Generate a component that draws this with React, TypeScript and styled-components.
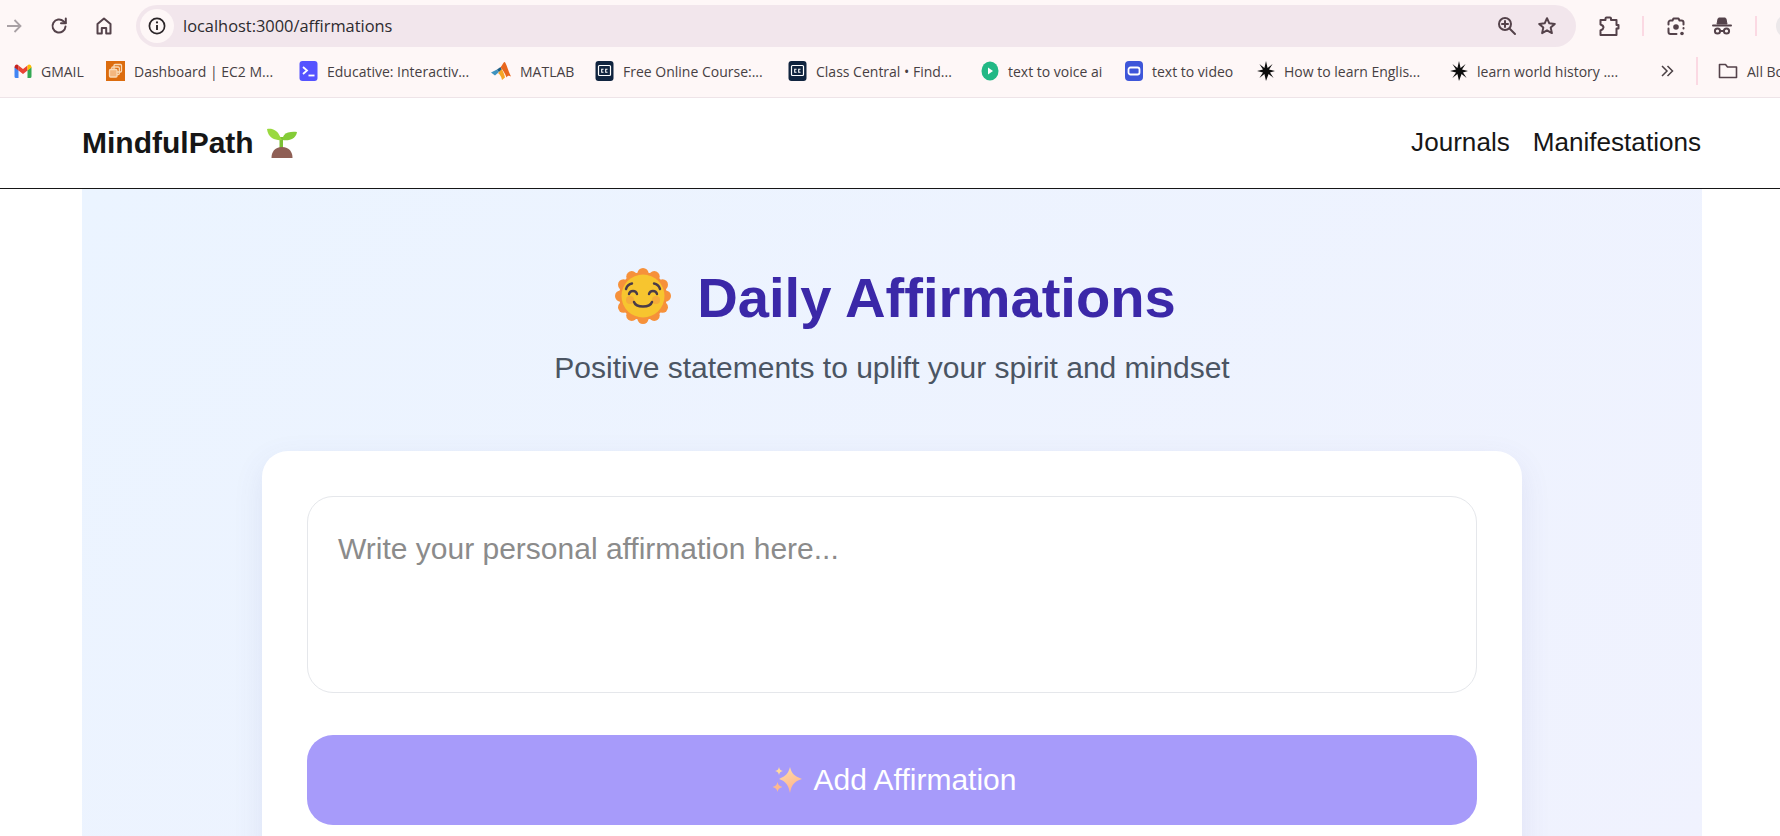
import React from 'react';
import styled, { createGlobalStyle } from 'styled-components';

const GlobalStyle = createGlobalStyle`
    html, body {
        margin: 0;
        padding: 0;
        height: 100%;
        overflow: hidden;
        background: #ffffff;
        font-family: 'Liberation Sans', Arial, sans-serif;
    }
    * {
        box-sizing: border-box;
    }
`;

const Page = styled.div`
    width: 1780px;
    height: 836px;
    overflow: hidden;
    display: flex;
    flex-direction: column;
`;

/* browser chrome */
const Chrome = styled.div`
    height: 98px;
    flex: none;
    background: #fef7f7;
    border-bottom: 1px solid #eee4e8;
    display: flex;
    flex-direction: column;
    font-family: 'Open Sans', 'Noto Sans', sans-serif;
`;

const Toolbar = styled.div`
    height: 47px;
    padding-top: 5px;
    display: flex;
    align-items: center;
`;

const NavIcons = styled.div`
    width: 136px;
    height: 42px;
    flex: none;
    padding-left: 4px;
    display: flex;
    align-items: center;
    gap: 25px;
`;

const AddressBar = styled.div`
    width: 1440px;
    height: 42px;
    flex: none;
    border-radius: 21px;
    background: #f2e6ec;
    padding: 0 19px 0 4px;
    display: flex;
    align-items: center;
`;

const InfoChip = styled.div`
    width: 34px;
    height: 34px;
    border-radius: 50%;
    background: #fef7f7;
    display: flex;
    align-items: center;
    justify-content: center;
    flex: none;
`;

const Url = styled.span`
    margin: 0 0 2px 9px;
    font-size: 16.4px;
    color: #2d2a2e;
    flex: 1;
`;

const AddressActions = styled.div`
    display: flex;
    align-items: center;
    gap: 20px;
`;

const ToolbarActions = styled.div`
    flex: 1;
    padding-left: 22px;
    display: flex;
    align-items: center;
`;

const ToolDivider = styled.div<{ $after: number }>`
    width: 2px;
    height: 20px;
    background: #fbd9e3;
    margin: 0 ${({ $after }) => $after}px 0 22px;
    flex: none;
`;

const ToolbarSpacer = styled.div`
    width: 25px;
    flex: none;
`;

const ProfileStub = styled.div`
    width: 24px;
    height: 24px;
    border-radius: 50%;
    background: #ece8ea;
    flex: none;
`;

const BookmarkBar = styled.div`
    height: 50px;
    padding: 0 0 2px 14px;
    display: flex;
    align-items: center;
    white-space: nowrap;
    overflow: hidden;
`;

const Bookmark = styled.div<{ $width: number }>`
    display: flex;
    align-items: center;
    gap: 9px;
    flex: none;
    width: ${({ $width }) => $width}px;
    font-size: 14px;
    color: #473f43;

    svg {
        flex: none;
    }
`;

const Chevrons = styled.div`
    width: 14px;
    height: 14px;
    flex: none;
    display: flex;
`;

const BarDivider = styled.div`
    width: 2px;
    height: 28px;
    background: #fbd9e3;
    margin: 0 20px 0 22px;
    flex: none;
`;

/* app header */
const Header = styled.header`
    height: 91px;
    flex: none;
    padding: 0 79px 0 82px;
    background: #ffffff;
    border-bottom: 1px solid #161616;
    display: flex;
    align-items: center;
    justify-content: space-between;
`;

const Brand = styled.div`
    display: flex;
    align-items: center;
    gap: 13px;
    font-size: 30px;
    font-weight: 700;
    color: #161616;
`;

const Links = styled.nav`
    display: flex;
    gap: 23px;
    padding-bottom: 2px;
`;

const NavLink = styled.a`
    font-size: 26.1px;
    color: #161616;
`;

/* page body */
const Main = styled.main`
    width: 1620px;
    margin: 0 auto 0 82px;
    flex: 1;
    padding-top: 79px;
    background: linear-gradient(135deg, #ebf4ff 0%, #f0f2fe 100%);
    display: flex;
    flex-direction: column;
    align-items: center;
`;

const Title = styled.h1`
    margin: 0;
    padding-left: 7px;
    display: flex;
    align-items: center;
    gap: 26px;
    font-size: 56.2px;
    line-height: 60px;
    font-weight: 700;
    color: #3b28a8;
`;

const SunSvg = styled.svg`
    flex: none;
    margin-bottom: 4px;
`;

const Subtitle = styled.p`
    margin: 22px 0 0;
    font-size: 30px;
    line-height: 36px;
    color: #4b5563;
`;

const Card = styled.section`
    width: 1260px;
    margin-top: 65px;
    padding: 45px;
    flex: none;
    border-radius: 26px;
    background: #ffffff;
    box-shadow: 0 10px 30px rgba(80, 80, 160, 0.1);
`;

const AffirmationInput = styled.textarea`
    display: block;
    width: 100%;
    height: 197px;
    padding: 34px 30px;
    border: 1px solid #e5e7eb;
    border-radius: 26px;
    resize: none;
    outline: none;
    font-family: 'Liberation Sans', Arial, sans-serif;
    font-size: 30px;
    line-height: 36px;
    color: #333333;

    &::placeholder {
        color: #8b8b8b;
        opacity: 1;
    }
`;

const AddButton = styled.button`
    width: 100%;
    height: 90px;
    margin-top: 42px;
    padding: 0 0 0 4px;
    border: none;
    border-radius: 26px;
    background: #a79bfa;
    color: #ffffff;
    font-family: 'Liberation Sans', Arial, sans-serif;
    font-size: 30px;
    display: flex;
    align-items: center;
    justify-content: center;
    gap: 12px;
`;

const Stroke = { fill: 'none', stroke: '#54424a', strokeWidth: 2, strokeLinecap: 'round', strokeLinejoin: 'round' } as const;

const ForwardIcon = () => (
    <svg width="20" height="20" viewBox="0 0 20 20">
        <path d="M3 10h13M10.500 4l6 6-6 6" fill="none" stroke="#a9a1a5" strokeWidth="1.800" />
    </svg>
);

const ReloadIcon = () => (
    <svg width="20" height="20" viewBox="0 0 20 20">
        <path d="M16.500 10.500a6.500 6.500 0 1 1-2-5.200L16.500 7" {...Stroke} />
        <path d="M16.800 2.500V7.300h-4.800" {...Stroke} />
    </svg>
);

const HomeIcon = () => (
    <svg width="20" height="20" viewBox="0 0 20 20">
        <path d="M3.500 17.500V8l6.500-5.500L16.500 8v9.500h-4.300V12H7.800v5.500z" {...Stroke} />
    </svg>
);

const InfoIcon = () => (
    <svg width="18" height="18" viewBox="0 0 18 18">
        <circle cx="9" cy="9" r="7.600" fill="none" stroke="#2b2528" strokeWidth="1.700" />
        <path d="M9 8v5" stroke="#2b2528" strokeWidth="1.900" />
        <circle cx="9" cy="5.400" r="1.100" fill="#2b2528" />
    </svg>
);

const ZoomIcon = () => (
    <svg width="20" height="20" viewBox="0 0 20 20">
        <circle cx="8" cy="8" r="6" {...Stroke} />
        <path d="M12.500 12.500l5.500 5.500M8 5v6M5 8h6" {...Stroke} />
    </svg>
);

const StarIcon = () => (
    <svg width="20" height="20" viewBox="0 0 20 20">
        <path d="M10 2.200l2.300 5.100 5.500.6-4.100 3.700 1.200 5.500L10 14.300l-4.900 2.800 1.200-5.500-4.100-3.700 5.500-.6z" {...Stroke} />
    </svg>
);

const ExtensionIcon = () => (
    <svg width="22" height="22" viewBox="0 0 22 22">
        <path
            d="M2.500 5H7.500V3.500Q7.500 2.500 8.500 2.500H12Q13 2.500 13 3.500V5H18.500V10H20.500V13.500H18.500V20H2.500V15.500Q5.500 14 5.500 12.500Q5.500 10.500 2.500 9.500Z"
            {...Stroke}
        />
    </svg>
);

const LensIcon = () => (
    <svg width="20" height="22" viewBox="0 0 20 22">
        <path d="M2.500 9.500V7.500a2 2 0 0 1 2-2H6.500L7.500 3.500h5l1 2h2a2 2 0 0 1 2 2v2M2.500 13.500V17a2 2 0 0 0 2 2h6M17.500 13V13.500" {...Stroke} />
        <circle cx="10" cy="12" r="2.800" fill="#54424a" />
        <circle cx="16" cy="18.500" r="1.800" fill="#54424a" />
    </svg>
);

const IncognitoIcon = () => (
    <svg width="22" height="22" viewBox="0 0 22 22">
        <path d="M6 9L7 4Q7.200 3 8 3H14Q14.800 3 15 4L16 9z" fill="#54424a" stroke="#54424a" strokeWidth="1" strokeLinejoin="round" />
        <path d="M2 10.500h18" {...Stroke} />
        <circle cx="6.500" cy="16" r="2.600" {...Stroke} />
        <circle cx="15.500" cy="16" r="2.600" {...Stroke} />
        <path d="M9.500 16h3" {...Stroke} />
    </svg>
);

const GmailIcon = () => (
    <svg width="18" height="14" viewBox="0 0 17 14">
        <path d="M0 3v9.500A1.500 1.500 0 0 0 1.500 14H4V6z" fill="#4285f4" />
        <path d="M17 3v9.500a1.500 1.500 0 0 1-1.500 1.500H13V6z" fill="#34a853" />
        <path d="M13 1.500V6.500L8.500 10 4 6.500v-5L8.500 5z" fill="#ea4335" />
        <path d="M0 3.500C0 1 2.500-.5 4 1.500V6.500L0 3.500z" fill="#c5221f" />
        <path d="M17 3.500C17 1 14.500-.5 13 1.500V6.500l4-3z" fill="#fbbc04" />
    </svg>
);

const Ec2Icon = () => (
    <svg width="19" height="20" viewBox="0 0 19 20">
        <rect width="19" height="20" fill="#dc6c0e" />
        <rect x="8" y="3.500" width="7.500" height="7.500" rx="1" fill="none" stroke="#f8d9b6" strokeWidth="1.300" />
        <rect x="5.800" y="6" width="7.500" height="7.500" rx="1" fill="none" stroke="#f8d9b6" strokeWidth="1.300" />
        <rect x="3.500" y="8.500" width="7.500" height="7.500" rx="1" fill="#f3b67e" stroke="#f8d9b6" strokeWidth="1.300" />
    </svg>
);

const EducativeIcon = () => (
    <svg width="19" height="20" viewBox="0 0 18 20">
        <rect width="18" height="20" rx="3" fill="#5553ff" />
        <path d="M3.500 6l4 3.500-4 3.500" fill="none" stroke="#fff" strokeWidth="1.800" />
        <path d="M9 14.500h6" stroke="#fff" strokeWidth="1.800" />
    </svg>
);

const MatlabIcon = () => (
    <svg width="20" height="20" viewBox="0 0 20 20">
        <path d="M0 11.500l6-3 2 2.500-4 3.500z" fill="#3f93bf" />
        <path d="M6 8.500L9.500 6l1.500 3-3 2z" fill="#1f5f86" />
        <path d="M9.500 6.500C11.500 3.500 12.500 1 13.500 1c1.500 0 3.500 8.500 6.500 14.500-2-1-3.500-1-4.500 1-1.500-4-3.500-7.500-6-10z" fill="#e8661c" />
        <path d="M7 12c1.500-.5 2.500-3 3.500-4 1.500 2 3 5.500 3.500 8.500-1.500 1-2 2-3 2.500-.5-3-2-5.500-4-7z" fill="#f5a524" />
    </svg>
);

const CcIcon = () => (
    <svg width="19" height="20" viewBox="0 0 18 20">
        <rect width="18" height="20" rx="3" fill="#10243f" />
        <rect x="3" y="4.500" width="12" height="10" rx="1" fill="none" stroke="#fff" strokeWidth="1.200" />
        <path d="M8 8.200H6.200v3H8M12 8.200h-1.800v3H12" fill="none" stroke="#fff" strokeWidth="1.100" />
    </svg>
);

const PlayIcon = () => (
    <svg width="18" height="20" viewBox="0 0 18 20">
        <ellipse cx="9" cy="10" rx="8.500" ry="9.500" fill="#22b885" />
        <path d="M7 6.500l5 3.500-5 3.500z" fill="#ffffff" />
    </svg>
);

const VideoIcon = () => (
    <svg width="18" height="20" viewBox="0 0 18 20">
        <rect width="18" height="20" rx="4" fill="#3e56d9" />
        <rect x="3.500" y="6.500" width="11" height="7" rx="2" fill="none" stroke="#fff" strokeWidth="1.800" />
    </svg>
);

const SparkIcon = () => (
    <svg width="18" height="20" viewBox="0 0 18 20">
        <path d="M9 0l1.600 7 5-4-3.600 5.400L18 10l-5 1.600 3.600 5.400-5-4L9 20l-1.600-7-5 4L6 11.600 0 10l6-1.600L2.400 3l5 4z" fill="#0d0d0d" />
    </svg>
);

const ChevronsIcon = () => (
    <svg width="14" height="14" viewBox="0 0 14 14">
        <path d="M2 2l5 5-5 5M7.500 2l5 5-5 5" fill="none" stroke="#4b4145" strokeWidth="1.500" />
    </svg>
);

const FolderIcon = () => (
    <svg width="20" height="18" viewBox="0 0 20 18">
        <path d="M1.500 15.500V2.500h6l2 2.500h9v10.500z" fill="none" stroke="#54424a" strokeWidth="1.600" strokeLinejoin="round" />
    </svg>
);

const SeedlingIcon = () => (
    <svg width="30" height="30" viewBox="0 0 30 30">
        <path d="M12.500 9h3.500v12h-3.500z" fill="#7cc035" />
        <path d="M15 12C13 9 12 5 9 3 6 .8 3 .5 0 1c.5 4 2 7 5 9 3 1.800 7 2.500 10 2z" fill="#9ad93f" />
        <path d="M15.500 12c0-4 2-6.500 5.500-7.500 3-.8 6-.8 9-.5-.5 3-2 5.500-5 7-3 1.500-6.500 1.500-9.500 1z" fill="#84cc37" />
        <path d="M4.500 30c0-6 3-11 10.500-11s10.500 5 10.500 11z" fill="#8f5f55" />
    </svg>
);

/* scalloped petals placed round the face */
const sunBumps = Array.from({ length: 12 }, (_, i) => {
    const angle = (i / 12) * Math.PI * 2;
    return { cx: 28 + 22.5 * Math.cos(angle), cy: 28 + 22.5 * Math.sin(angle) };
});

const SunFaceIcon = () => (
    <SunSvg width="56" height="56" viewBox="0 0 56 56">
        <circle cx="28" cy="28" r="24" fill="#f58f36" />
        {sunBumps.map((bump) => (
            <circle key={bump.cx + ':' + bump.cy} cx={bump.cx} cy={bump.cy} r="5.500" fill="#f6913a" />
        ))}
        <circle cx="28" cy="28" r="21.500" fill="#f7c52f" />
        <circle cx="15" cy="32" r="4" fill="#f4a13e" opacity="0.7" />
        <circle cx="41" cy="32" r="4" fill="#f4a13e" opacity="0.7" />
        <path
            d="M14 26c1-4 7-4 8 0M34 26c1-4 7-4 8 0M19 34c2 6 16 6 18 0M11 21c1-3 3-5 6-5.500M45 21c-1-3-3-5-6-5.500"
            fill="none"
            stroke="#4a3b48"
            strokeWidth="2.400"
            strokeLinecap="round"
        />
    </SunSvg>
);

const SparklesIcon = () => (
    <svg width="30" height="28" viewBox="0 0 30 28">
        <defs>
            <linearGradient id="sparkleFill" x1="0" y1="0" x2="0.4" y2="1">
                <stop offset="0" stopColor="#ffe0a8" />
                <stop offset="1" stopColor="#ffb58f" />
            </linearGradient>
        </defs>
        <path d="M18 1c1.500 6 4 9 12 12-8 2.500-10.500 6-12 14-1.500-8-4-11.500-11-14 7-3 9.500-6 11-12z" fill="url(#sparkleFill)" />
        <path d="M7 1c.5 2.500 1.500 3.500 4 4-2.500.5-3.500 1.500-4 4-.5-2.500-1.500-3.500-4-4 2.500-.5 3.500-1.500 4-4z" fill="#ffd9a0" />
        <path d="M5.500 16c.6 3 1.800 4.200 5 5-3.200.8-4.400 2-5 5-.6-3-1.800-4.200-5-5 3.200-.8 4.400-2 5-5z" fill="#ffb98f" />
    </svg>
);

const bookmarks = [
    { width: 92, icon: <GmailIcon />, label: 'GMAIL' },
    { width: 193, icon: <Ec2Icon />, label: 'Dashboard | EC2 M...' },
    { width: 192, icon: <EducativeIcon />, label: 'Educative: Interactiv...' },
    { width: 104, icon: <MatlabIcon />, label: 'MATLAB' },
    { width: 193, icon: <CcIcon />, label: 'Free Online Course:...' },
    { width: 193, icon: <CcIcon />, label: 'Class Central • Find...' },
    { width: 144, icon: <PlayIcon />, label: 'text to voice ai' },
    { width: 132, icon: <VideoIcon />, label: 'text to video' },
    { width: 193, icon: <SparkIcon />, label: 'How to learn Englis...' },
    { width: 210, icon: <SparkIcon />, label: 'learn world history ....' },
];

const App: React.FC = () => (
    <Page>
        <GlobalStyle />
        <Chrome>
            <Toolbar>
                <NavIcons>
                    <ForwardIcon />
                    <ReloadIcon />
                    <HomeIcon />
                </NavIcons>
                <AddressBar>
                    <InfoChip>
                        <InfoIcon />
                    </InfoChip>
                    <Url>localhost:3000/affirmations</Url>
                    <AddressActions>
                        <ZoomIcon />
                        <StarIcon />
                    </AddressActions>
                </AddressBar>
                <ToolbarActions>
                    <ExtensionIcon />
                    <ToolDivider $after={22} />
                    <LensIcon />
                    <ToolbarSpacer />
                    <IncognitoIcon />
                    <ToolDivider $after={19} />
                    <ProfileStub />
                </ToolbarActions>
            </Toolbar>
            <BookmarkBar>
                {bookmarks.map((item) => (
                    <Bookmark key={item.label} $width={item.width}>
                        {item.icon}
                        <span>{item.label}</span>
                    </Bookmark>
                ))}
                <Chevrons>
                    <ChevronsIcon />
                </Chevrons>
                <BarDivider />
                <Bookmark $width={120}>
                    <FolderIcon />
                    <span>All Bookmarks</span>
                </Bookmark>
            </BookmarkBar>
        </Chrome>
        <Header>
            <Brand>
                MindfulPath
                <SeedlingIcon />
            </Brand>
            <Links>
                <NavLink>Journals</NavLink>
                <NavLink>Manifestations</NavLink>
            </Links>
        </Header>
        <Main>
            <Title>
                <SunFaceIcon />
                Daily Affirmations
            </Title>
            <Subtitle>Positive statements to uplift your spirit and mindset</Subtitle>
            <Card>
                <AffirmationInput placeholder="Write your personal affirmation here..." />
                <AddButton>
                    <SparklesIcon />
                    Add Affirmation
                </AddButton>
            </Card>
        </Main>
    </Page>
);

export default App;
